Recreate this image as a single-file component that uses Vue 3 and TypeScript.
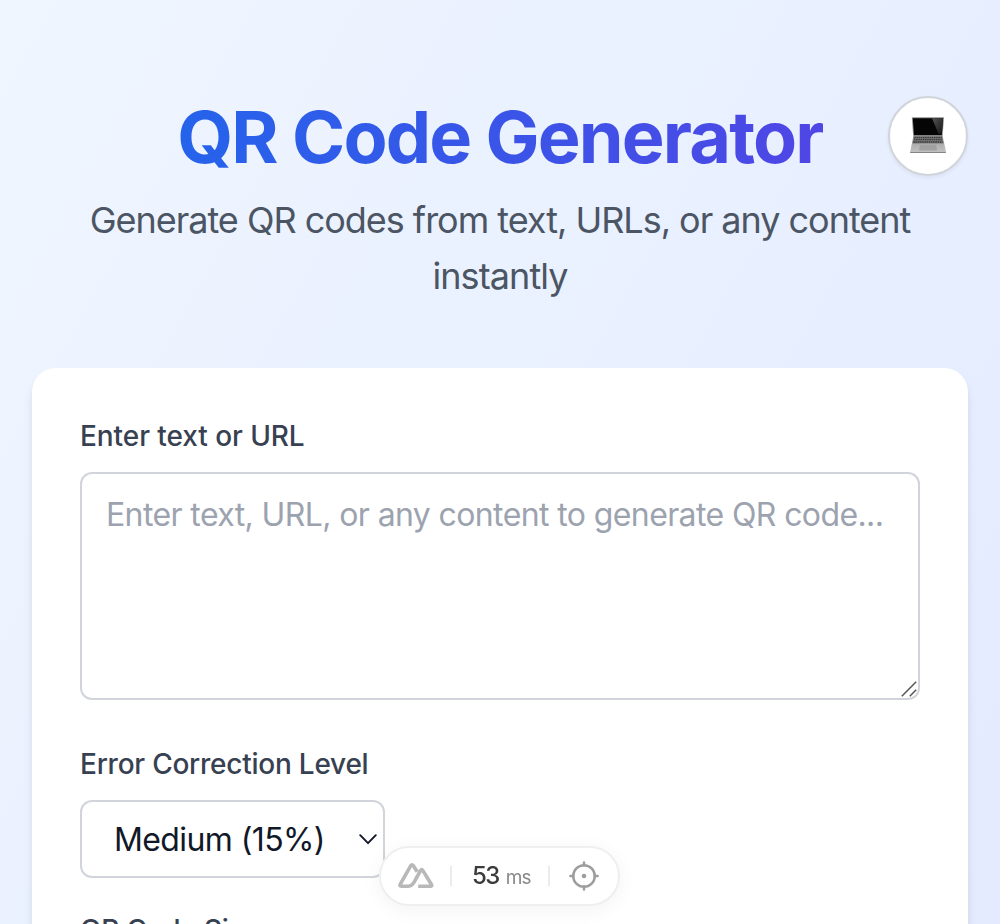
<script setup lang="ts">
import { ref } from 'vue'

const content = ref('')
const level = ref('Medium (15%)')
const renderTime = ref(53)
</script>

<template>
  <div class="page">
    <header class="header">
      <h1 class="title"><span>QR Code Generator</span></h1>
      <p class="subtitle"><span class="line-a">Generate QR codes from text, URLs, or any content</span><br /><span class="line-b">instantly</span></p>
      <button class="theme" aria-label="Theme">
        <svg width="40" height="40" viewBox="0 0 40 40">
          <defs>
            <linearGradient id="base" x1="0" y1="0" x2="0" y2="1">
              <stop offset="0" stop-color="#999" />
              <stop offset="1" stop-color="#c4c4c4" />
            </linearGradient>
            <linearGradient id="glare" x1="0" y1="0" x2="1" y2="1">
              <stop offset="0" stop-color="#555" />
              <stop offset="1" stop-color="#151515" />
            </linearGradient>
          </defs>
          <path d="M3.8 1.3h32.2l-1.4 19h-29.4z" fill="#8d8d8d" />
          <path d="M4.8 2.3h30.2l-1.2 17H6z" fill="#050505" />
          <path d="M24 2.3h11l-1.2 15.5h-3.3z" fill="url(#glare)" />
          <path d="M5.5 19.6h29l3.5 16.2q.1 1.2-1.2 1.2H3.4q-1.3 0-1.2-1.2z" fill="url(#base)" />
          <path d="M5.8 20.5h28.4l1.4 7H4.4z" fill="#7a7a7a" />
          <path d="M6.2 21.5h27.6M5.9 23.7h28.2M5.3 26h29.4" stroke="#3a3a3a" stroke-width="1.3" stroke-dasharray="1.6 .6" />
          <path d="M11.9 28.8h16.4l.7 5.7H11.1z" fill="#a1a1a1" />
          <path d="M2.2 36.5h35.6" stroke="#858585" />
        </svg>
      </button>
    </header>

    <main class="card">
      <label class="label" for="content"><span class="lb1">Enter text or URL</span></label>
      <div class="area-wrap">
        <textarea id="content" v-model="content" class="area" placeholder="Enter text, URL, or any content to generate QR code..."></textarea>
        <svg class="grip" width="16" height="16" viewBox="0 0 16 16" fill="none" stroke="#555" stroke-width="1.5">
          <path d="M.8 15.2 15.2.8M8.8 15.2l6.4-6.4" />
        </svg>
      </div>
      <div class="label second"><span class="lb2">Error Correction Level</span></div>
      <button class="select">
        <span>{{ level }}</span>
        <svg width="18" height="11" viewBox="0 0 18 11" fill="none" stroke="#111827" stroke-width="1.9" stroke-linecap="round" stroke-linejoin="round">
          <path d="m1.2 1.2 7.8 8 7.8-8" />
        </svg>
      </button>
      <div class="label third"><span class="lb2">QR Code Size</span></div>
    </main>

    <div class="devbar">
      <svg class="nuxt" width="36" height="26" viewBox="0 0 36 26" fill="none" stroke="#b8b8b8" stroke-width="3.6" stroke-linejoin="round" stroke-linecap="butt">
        <path d="M19.2 8.8 15.2 2.6Q14 1 12.8 2.6L2.3 21.2Q1.3 23.2 3.4 23.2H10Q13.6 23.2 15.8 19.6L22.5 7.6Q23.7 5.7 24.9 7.6L33.3 21.2Q34.5 23.2 32.4 23.2H20.2" />
      </svg>
      <i class="sep"></i>
      <div class="time"><b>{{ renderTime }}</b><small>ms</small></div>
      <i class="sep"></i>
      <svg class="target" width="30" height="30" viewBox="0 0 30 30" fill="none" stroke="#9e9e9e" stroke-width="2.5" stroke-linecap="round">
        <circle cx="15" cy="15" r="10.8" />
        <path d="M15 1.4v3M15 25.6v3M1.4 15h3M25.6 15h3" />
        <circle cx="15" cy="15" r="2.3" fill="#9e9e9e" stroke="none" />
      </svg>
    </div>
  </div>
</template>

<style>
html,
body {
  margin: 0;
  height: 924px;
  overflow: hidden;
}
</style>

<style scoped>
.page {
  box-sizing: border-box;
  height: 1800px;
  padding: 96px 32px 0;
  background: linear-gradient(to bottom right, #eff6ff, #e0e7ff);
  font-family: Inter, "Liberation Sans", sans-serif;
}
.header {
  position: relative;
  height: 272px;
  text-align: center;
}
.title {
  margin: 0 0 16px;
  height: 80px;
  font-size: 72px;
  line-height: 82px;
  font-weight: 700;
  white-space: nowrap;
}
.title span {
  display: inline-block;
  background: linear-gradient(to right, #2563eb, #4f46e5);
  background-clip: text;
  -webkit-background-clip: text;
  color: transparent;
  letter-spacing: -1.85px;
}
.subtitle {
  margin: 0;
  font-size: 36px;
  line-height: 56px;
  color: #4b5563;
  white-space: nowrap;
}
.line-a {
  letter-spacing: -1.02px;
}
.line-b {
  letter-spacing: -0.9px;
}
.theme {
  position: absolute;
  top: 0;
  right: 0;
  box-sizing: border-box;
  width: 80px;
  height: 80px;
  padding: 0;
  display: flex;
  align-items: center;
  justify-content: center;
  border: 2px solid #d1d5db;
  border-radius: 50%;
  background: #fff;
  box-shadow: 0 2px 4px rgba(0, 0, 0, 0.06);
}
.card {
  box-sizing: border-box;
  height: 1300px;
  padding: 48px;
  border-radius: 24px;
  background: #fff;
  box-shadow: 0 8px 12px -2px rgba(0, 0, 0, 0.1), 0 4px 8px -4px rgba(0, 0, 0, 0.1);
}
.label {
  display: block;
  height: 40px;
  margin-bottom: 16px;
  font-size: 28px;
  line-height: 41px;
  font-weight: 500;
  color: #374151;
  white-space: nowrap;
}
.lb1 {
  letter-spacing: -0.07px;
}
.lb2 {
  letter-spacing: -0.24px;
}
.area-wrap {
  position: relative;
  height: 228px;
}
.area {
  box-sizing: border-box;
  display: block;
  width: 840px;
  height: 228px;
  padding: 17px 24px 15px;
  border: 2px solid #d1d5db;
  border-radius: 12px;
  outline: none;
  resize: none;
  background: #fff;
  font: 400 32px/48px Inter, "Liberation Sans", sans-serif;
  letter-spacing: -0.61px;
  color: #111827;
  overflow: hidden;
}
.area::placeholder {
  color: #9ca3af;
}
.grip {
  position: absolute;
  right: 3px;
  bottom: 3px;
}
.second {
  margin-top: 44px;
}
.select {
  box-sizing: border-box;
  width: 305px;
  height: 78px;
  padding: 0 6px 0 32px;
  display: flex;
  align-items: center;
  justify-content: space-between;
  border: 2px solid #d1d5db;
  border-radius: 12px;
  background: #fff;
  font: 400 32px/48px Inter, "Liberation Sans", sans-serif;
  color: #111827;
}
.select span {
  padding-top: 2px;
  letter-spacing: -0.6px;
}
.third {
  margin-top: 32px;
}
.devbar {
  position: fixed;
  top: 846px;
  left: 379px;
  box-sizing: border-box;
  width: 241px;
  height: 60px;
  padding: 0 18px 0 17px;
  display: flex;
  align-items: center;
  border: 2px solid #efefef;
  border-radius: 30px;
  background: #fff;
  box-shadow: 0 4px 20px rgba(0, 0, 0, 0.05);
}
.nuxt,
.target {
  flex: none;
}
.sep {
  width: 2px;
  height: 20px;
  margin: 0 0 0 16px;
  background: #ebebeb;
}
.time {
  width: 80px;
  padding-left: 20px;
  box-sizing: border-box;
  display: flex;
  align-items: baseline;
  white-space: nowrap;
}
.time b {
  font-size: 24px;
  font-weight: 500;
  line-height: 30px;
  letter-spacing: -1.6px;
  color: #3c3c3c;
}
.time small {
  margin-left: 7px;
  font-size: 19px;
  letter-spacing: -0.8px;
  color: #888;
}
.target {
  margin-left: 19px;
}
</style>
